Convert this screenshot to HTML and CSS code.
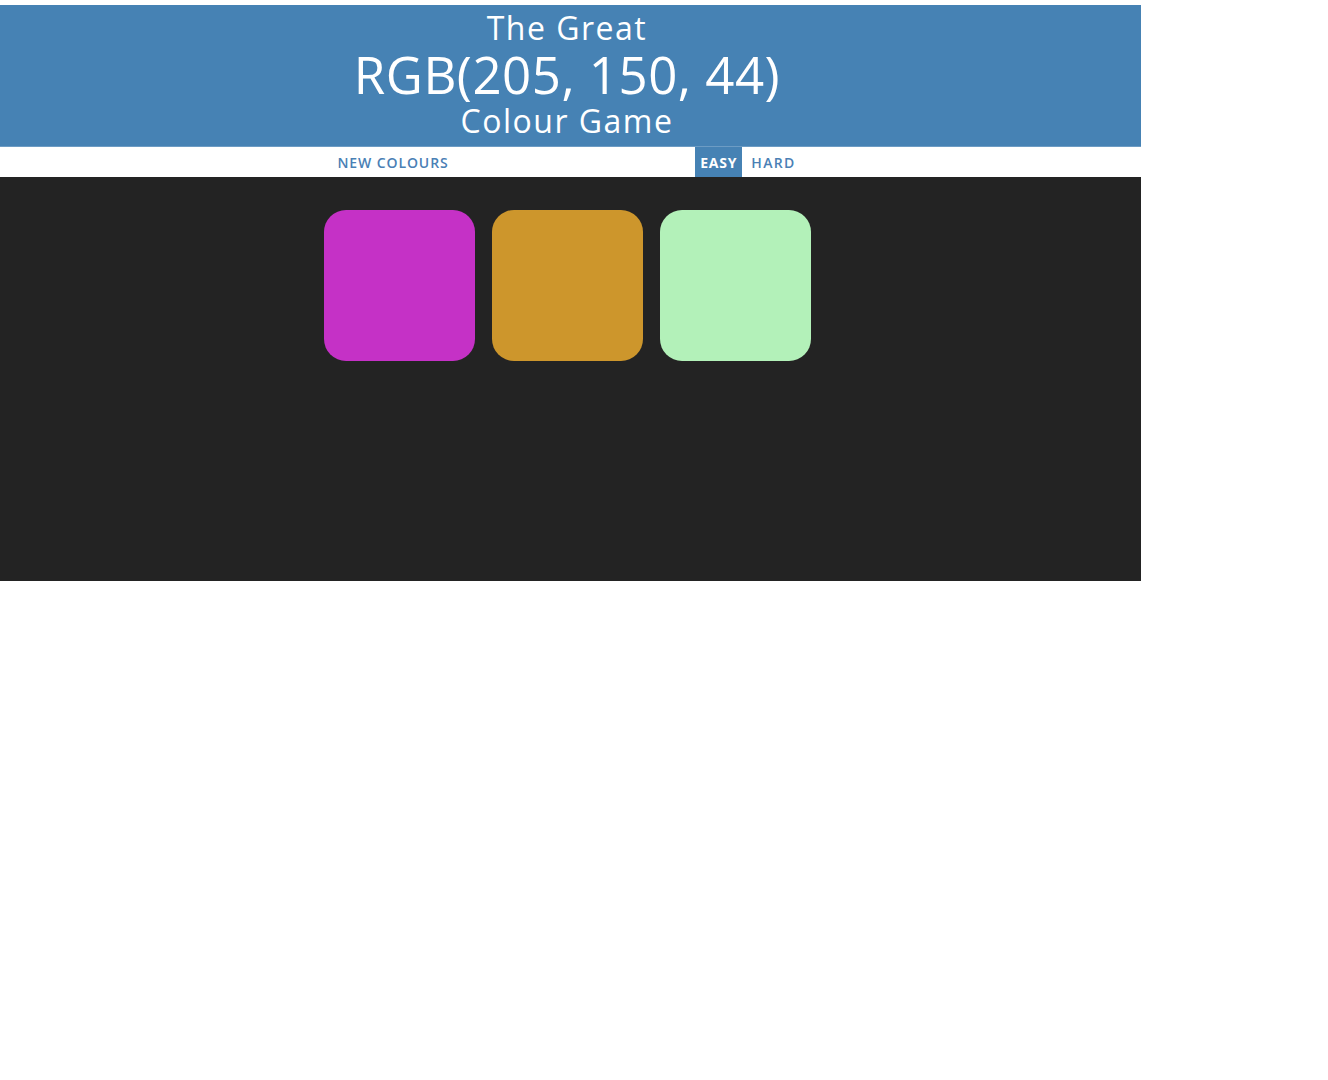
FILE: index.html
```html
<!DOCTYPE html>
<html lang="en">
<head>
<meta charset="utf-8">
<title>The Great RGB Colour Game</title>
<link rel="stylesheet" href="styles.css">
</head>
<body>
<div class="page">
  <h1 class="header">
    <span class="title-small">The Great</span>
    <span class="title-rgb">RGB(205, 150, 44)</span>
    <span class="title-small">Colour Game</span>
  </h1>
  <div class="stripe">
    <div class="stripe-inner">
      <button class="btn">NEW COLOURS</button>
      <span class="message"></span>
      <div class="modes">
        <button class="btn mode selected">EASY</button>
        <button class="btn mode">HARD</button>
      </div>
    </div>
  </div>
  <div class="board">
    <div class="grid">
      <div class="square sq1"></div>
      <div class="square sq2"></div>
      <div class="square sq3"></div>
    </div>
  </div>
</div>
</body>
</html>
```

FILE: styles.css
```css
html, body {
  margin: 0;
  padding: 0;
  background: #ffffff;
}
body {
  font-family: "Open Sans", "DejaVu Sans", sans-serif;
}
.page {
  width: 1141px;
  margin-top: 5px;
}
.header {
  margin: 0;
  height: 142px;
  box-sizing: border-box;
  background: #4682b4;
  border-bottom: 1px solid #6d9cc4;
  color: #ffffff;
  font-weight: 400;
  text-align: center;
  padding-right: 7px;
  padding-top: 3px;
}
.title-small {
  display: block;
  font-size: 32px;
  line-height: 39px;
  letter-spacing: 1.5px;
}
.title-rgb {
  display: block;
  font-size: 51px;
  line-height: 54px;
  letter-spacing: 0.5px;
}
.stripe {
  height: 30px;
  background: #ffffff;
  padding-right: 7px;
}
.stripe-inner {
  width: 487px;
  height: 30px;
  margin: 0 auto;
  display: flex;
  align-items: stretch;
}
.btn {
  border: none;
  background: #ffffff;
  color: #4a80b5;
  font-family: inherit;
  font-size: 14px;
  font-weight: 600;
  letter-spacing: 0.9px;
  padding: 0 5px;
  margin: 0;
  height: 30px;
  cursor: pointer;
}
.stripe-inner > .btn {
  padding-left: 14px;
}
.message {
  flex: 1;
}
.modes {
  display: flex;
  gap: 4px;
  margin-right: 10px;
}
.mode.selected {
  background: #4682b4;
  color: #ffffff;
  font-weight: 700;
  letter-spacing: 0.8px;
}
.mode:last-child {
  letter-spacing: 1.3px;
}
.board {
  height: 404px;
  background: #232323;
  padding-right: 7px;
  padding-top: 33px;
  box-sizing: border-box;
}
.grid {
  width: 487px;
  margin: 0 auto;
  display: flex;
  gap: 17px;
}
.square {
  width: 151px;
  height: 151px;
  border-radius: 22px;
}
.sq1 { background: #c531c6; }
.sq2 { background: #cd962c; }
.sq3 { background: #b3f1b9; }
```
